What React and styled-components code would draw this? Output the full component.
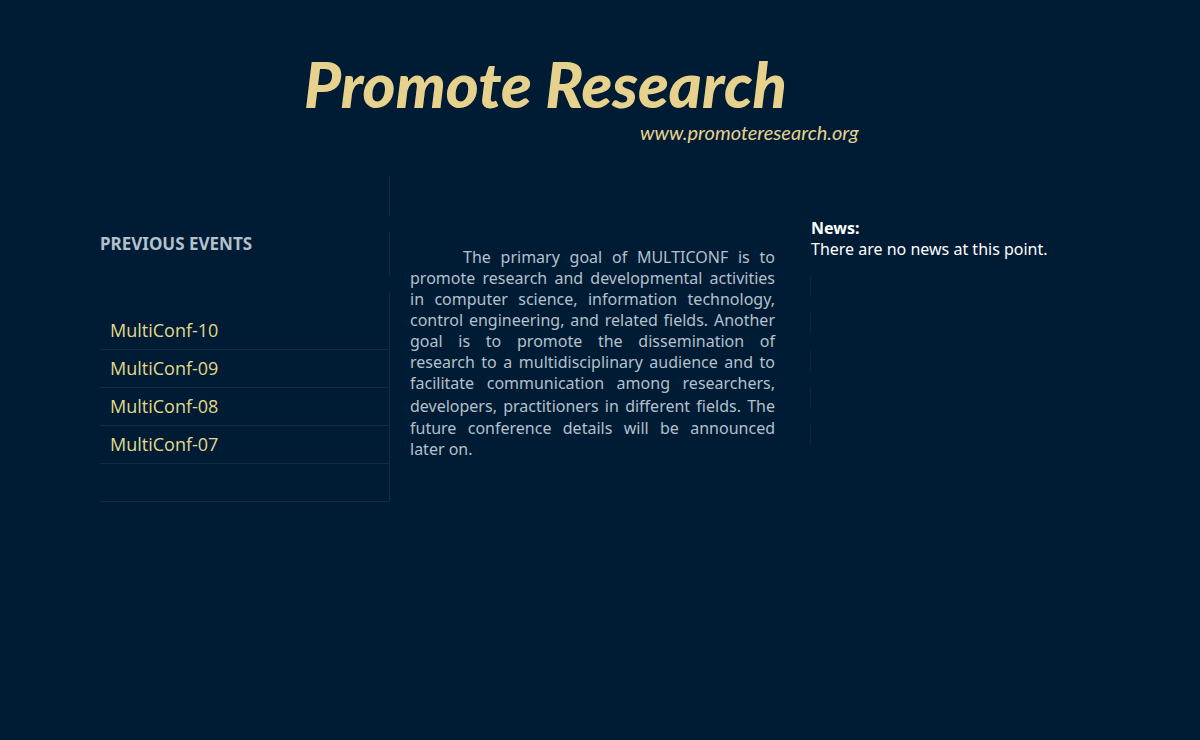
import React from "react";
import styled, { createGlobalStyle } from "styled-components";

const GlobalStyle = createGlobalStyle`
  * {
    box-sizing: border-box;
  }

  body {
    margin: 0;
    background: #001b34;
    color: #b4c0cb;
    font-family: "Noto Sans", "Open Sans", sans-serif;
    font-size: 16px;
    line-height: 21px;
  }
`;

const Page = styled.div`
  padding: 48px 100px;
`;

const Header = styled.header`
  display: flex;
  flex-direction: column;
  align-items: flex-start;
  padding-left: 204px;
  margin-bottom: 32px;
  color: #e6d28c;
  font-family: Lato, sans-serif;
  font-style: italic;
`;

const Title = styled.h1`
  margin: 0;
  font-size: 63px;
  font-weight: 900;
  line-height: 72px;
`;

const Address = styled.span`
  padding-left: 336px;
  font-size: 20px;
  font-weight: 400;
  line-height: 24px;
`;

const Columns = styled.div`
  display: grid;
  grid-template-columns: 29fr 42fr 29fr;
  align-items: start;
`;

const Sidebar = styled.nav`
  display: flex;
  flex-direction: column;
  gap: 16px;
`;

const SidebarBlock = styled.div`
  height: ${(props) => props.$height};
  border-right: 1px solid #122c43;
`;

const SidebarTitle = styled.h2`
  margin: 0;
  font-size: 17px;
  line-height: 24px;
`;

const EventList = styled.ul`
  margin: 0;
  padding: 20px 0 0;
  list-style: none;
  border-right: 1px solid #122c43;
`;

const EventItem = styled.li`
  height: 38px;
  border-bottom: 1px solid #122c43;
`;

const EventLink = styled.a`
  display: block;
  padding: 0 10px;
  color: #e0d98a;
  font-family: "Open Sans", sans-serif;
  font-size: 18px;
  line-height: 37px;
  text-decoration: none;
`;

const Main = styled.main`
  padding: 71px 35px 0 20px;
`;

const Goal = styled.p`
  margin: 0;
  text-align: justify;
  text-indent: 53px;
`;

const Audience = styled.span`
  line-height: 24px;
`;

const News = styled.section`
  display: flex;
  flex-direction: column;
  gap: 16px;
  padding-top: 42px;
`;

const NewsText = styled.div`
  border-left: 1px solid #06203a;
  color: #fff;
`;

const NewsTitle = styled.h2`
  margin: 0;
  font-size: 16px;
  line-height: 21px;
`;

const NewsLine = styled.div`
  height: 21px;
  border-left: 1px solid #0c263f;
`;

const events = ["MultiConf-10", "MultiConf-09", "MultiConf-08", "MultiConf-07"];

const App = () => {
  return (
    <>
      <GlobalStyle />
      <Page>
        <Header>
          <Title>Promote Research</Title>
          <Address>www.promoteresearch.org</Address>
        </Header>

        <Columns>
          <Sidebar>
            <SidebarBlock $height="40px" />
            <SidebarBlock $height="44px">
              <SidebarTitle>PREVIOUS EVENTS</SidebarTitle>
            </SidebarBlock>
            <EventList>
              {events.map((name) => (
                <EventItem key={name}>
                  <EventLink href="#">{name}</EventLink>
                </EventItem>
              ))}
              <EventItem />
            </EventList>
          </Sidebar>

          <Main>
            <Goal>
              The primary goal of MULTICONF is to promote research and
              developmental activities in computer science, information
              technology, control engineering, and related fields. Another goal
              is to promote the dissemination of research&nbsp;to a
              multidisciplinary audience and to facilitate communication among
              researchers,{" "}
              <Audience>developers, practitioners in different fields.</Audience>{" "}
              The future conference details will be announced later on.
            </Goal>
          </Main>

          <News>
            <NewsText>
              <NewsTitle>News:</NewsTitle>
              There are no news at this point.
            </NewsText>
            <NewsLine />
            <NewsLine />
            <NewsLine />
            <NewsLine />
            <NewsLine />
          </News>
        </Columns>
      </Page>
    </>
  );
};

export default App;
